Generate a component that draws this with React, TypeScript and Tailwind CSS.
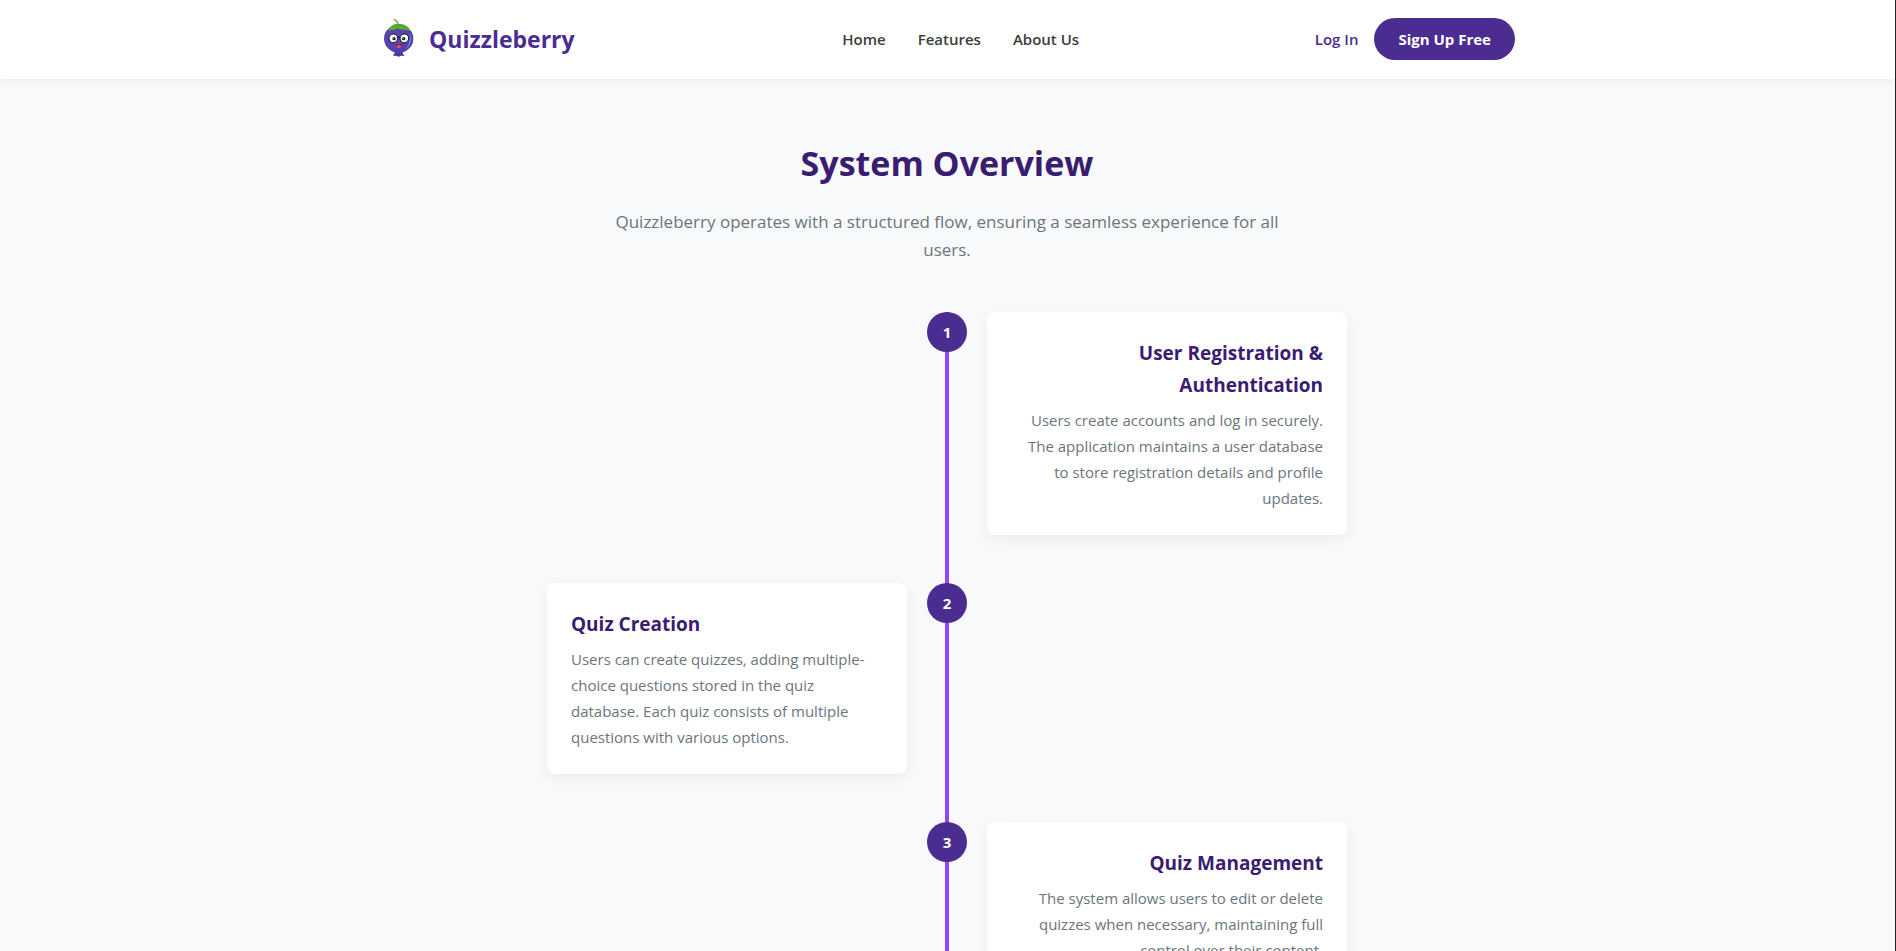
type Step = { title: string; text: string };

const steps: Step[] = [
  {
    title: "User Registration & Authentication",
    text: "Users create accounts and log in securely. The application maintains a user database to store registration details and profile updates.",
  },
  {
    title: "Quiz Creation",
    text: "Users can create quizzes, adding multiple-choice questions stored in the quiz database. Each quiz consists of multiple questions with various options.",
  },
  {
    title: "Quiz Management",
    text: "The system allows users to edit or delete quizzes when necessary, maintaining full control over their content.",
  },
];

function BerryLogo() {
  return (
    <svg viewBox="4 9 120 135" className="h-[45px] w-10" aria-hidden="true">
      <defs>
        <radialGradient id="berry" cx="0.38" cy="0.4" r="0.68">
          <stop offset="0" stopColor="#5b45ac" />
          <stop offset="0.65" stopColor="#5743b0" />
          <stop offset="1" stopColor="#4938a6" />
        </radialGradient>
      </defs>
      <path d="M51 108 L76 108 L75 117 L80 126 L70 125 L63 128 L55 125 L46 126 L51 117 Z" fill="#4a38a2" />
      <path d="M63 34 C88 34 107 50 107 74 C107 97 88 115 63 117 C38 115 19 97 19 74 C19 50 38 34 63 34 Z" fill="url(#berry)" />
      <path d="M98 55 C107 76 98 98 82 106 C95 92 99 74 98 55 Z" fill="#6f78dd" />
      <path d="M61 31 C49 28 38 36 33 50 C43 45 49 52 60 42 C69 51 80 44 98 51 C93 37 77 27 61 31 Z" fill="#58ae30" />
      <path d="M62 34 C74 33 83 38 90 45" fill="none" stroke="#429430" strokeWidth="2" />
      <path d="M61 34 C61 25 56 18 49 17" fill="none" stroke="#4ea33a" strokeWidth="3.5" strokeLinecap="round" />
      <path d="M55 23 L62 27" stroke="#6ab94d" strokeWidth="3" strokeLinecap="round" />
      <circle cx="47" cy="73" r="13" fill="#fff" stroke="#17151e" strokeWidth="3" />
      <circle cx="80" cy="73" r="13" fill="#fff" stroke="#17151e" strokeWidth="3" />
      <path d="M60 71 Q63.5 67 67 71" fill="none" stroke="#17151e" strokeWidth="3.5" />
      <circle cx="49" cy="74" r="5" fill="#15131b" />
      <circle cx="78" cy="74" r="5" fill="#15131b" />
      <circle cx="47.5" cy="72.5" r="1.5" fill="#fff" />
      <circle cx="76.5" cy="72.5" r="1.5" fill="#fff" />
      <path d="M53 90 Q64 94 74 89 Q73 102 64 102 Q55 101 53 90 Z" fill="#8a1c38" />
      <path d="M56 97 Q64 91 72 97 Q69 102 64 102 Q58 102 56 97 Z" fill="#ed5960" />
    </svg>
  );
}

function TimelineStep({ step, number }: { step: Step; number: number }) {
  const onRight = number % 2 === 1;
  return (
    <li className="grid grid-cols-[1fr_40px_1fr] items-start gap-x-5">
      <div
        className={
          onRight
            ? "col-start-3 row-start-1 rounded-lg bg-white px-6 pt-[25px] pb-6 text-right shadow-[0_5px_15px_rgba(0,0,0,0.05)]"
            : "col-start-1 row-start-1 rounded-lg bg-white px-6 pt-[25px] pb-6 text-left shadow-[0_5px_15px_rgba(0,0,0,0.05)]"
        }
      >
        <h3 className="text-[19px] leading-8 font-bold text-[#3a1c71]">{step.title}</h3>
        <p className="mt-1.5 text-[15px] leading-[26px] text-[#6c757d]">{step.text}</p>
      </div>
      <div className="col-start-2 row-start-1 flex size-10 items-center justify-center rounded-full bg-[#4b2c91] text-[15px] font-bold text-white">
        {number}
      </div>
    </li>
  );
}

export default function App() {
  return (
    <div className="h-screen overflow-hidden border-r border-[#222] bg-[#f8f9fb] font-['Open_Sans','Noto_Sans',sans-serif] text-[#343a40]">
      <header className="relative bg-white pr-px shadow-[0_2px_10px_rgba(0,0,0,0.05)]">
        <div className="mx-auto flex h-[79px] max-w-[1200px] items-center justify-between px-8 pb-px">
          <a href="#" className="flex items-center gap-2.5 text-[23px] font-bold text-[#4b2c91]">
            <BerryLogo />
            Quizzleberry
          </a>
          <nav className="flex gap-8 pl-8 text-[15px] font-semibold text-[#3d3d3d]">
            <a href="#home">Home</a>
            <a href="#features">Features</a>
            <a href="#about">About Us</a>
          </nav>
          <div className="flex items-center gap-4 text-[15px]">
            <a href="#login" className="font-semibold text-[#4b2c91]">Log In</a>
            <button type="button" className="h-[42px] rounded-full bg-[#4b2c91] px-6 font-bold text-white">
              Sign Up Free
            </button>
          </div>
        </div>
      </header>

      <div className="pr-px">
        <main className="mx-auto max-w-[1200px] px-8 pt-[52px]">
          <h2 className="text-center text-[34px] leading-[64px] font-bold text-[#3a1c71]">System Overview</h2>
          <p className="mx-auto mt-[13px] max-w-[700px] text-center text-[17px] leading-7 text-[#6c757d]">
            Quizzleberry operates with a structured flow, ensuring a seamless experience for all users.
          </p>
          <div className="relative mx-auto mt-12 max-w-[800px]">
            <div className="absolute inset-y-0 left-1/2 w-1 -translate-x-1/2 bg-[#9147ff]" />
            <ol className="relative flex flex-col gap-12">
              {steps.map((step, index) => (
                <TimelineStep key={step.title} step={step} number={index + 1} />
              ))}
            </ol>
          </div>
        </main>
      </div>
    </div>
  );
}
